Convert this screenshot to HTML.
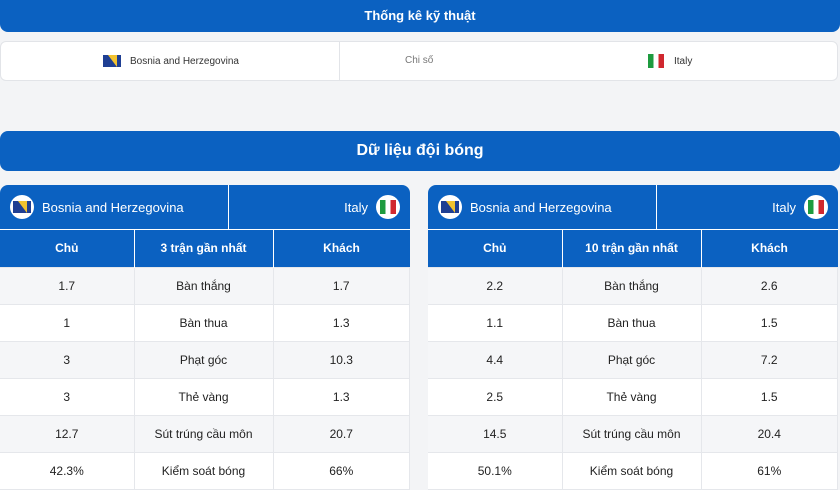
<!DOCTYPE html>
<html><head><meta charset="utf-8"><style>
*{box-sizing:border-box;margin:0;padding:0}
body{width:840px;height:486px;overflow:hidden;background:#f3f4f6;font-family:"Liberation Sans","Noto Sans CJK SC",sans-serif;position:relative}
.bar{position:absolute;left:0;width:840px;background:#0b61c1;color:#fff;font-weight:bold;text-align:center;border-radius:0 0 8px 8px}
.b1{top:0;height:32px;line-height:31px;font-size:13px}
.b2{top:131px;height:40px;line-height:40px;font-size:16px;border-radius:8px}
.card{position:absolute;top:41px;left:0;width:838px;height:40px;background:#fff;border:1px solid #e2e4e8;border-radius:6px;font-size:10px;color:#333}
.card .sep{position:absolute;left:338px;top:0;width:1px;height:38px;background:#e2e4e8}
.fl{display:inline-block;width:24px;height:24px;border-radius:50%;overflow:hidden;vertical-align:middle;background:#fff;position:relative}
.ba::before{content:"";position:absolute;left:3px;top:6px;width:18px;height:12px;background:#1f3f93}
.ba::after{content:"";position:absolute;left:8px;top:6px;width:9px;height:12px;background:#f2c22f;clip-path:polygon(0 0,100% 0,100% 100%)}
.it::before{content:"";position:absolute;left:4px;top:5px;width:16px;height:14px;background:linear-gradient(90deg,#1e9b3f 0 33%,#fff 33% 66%,#d0282f 66%)}
.tbl{position:absolute;top:185px;width:410px;background:#fff;border-radius:8px 8px 0 0;overflow:hidden}
.hd{height:45px;background:#0b61c1;color:#fff;font-size:13px;position:relative;border-bottom:1px solid #fff}
.hd .l{position:absolute;left:10px;top:10px;display:flex;align-items:center;gap:8px}
.hd .r{position:absolute;right:10px;top:10px;display:flex;align-items:center;gap:8px}
.hd .s{position:absolute;left:228px;top:0;width:1px;height:45px;background:#fff}
table{border-collapse:collapse;width:100%;font-size:12px;color:#222;text-align:center}
th{background:#0b61c1;color:#fff;height:37px;font-weight:bold;border-left:1px solid #fff}
td{height:37px;border:1px solid #e5e7eb}
th:first-child{border-left:none}
tr:nth-child(even) td{background:#f5f6f8}
td:first-child{border-left:none}
</style></head><body>
<div class="bar b1">Thống kê kỹ thuật</div>
<div class="card"><div class="sep"></div>
<div style="position:absolute;left:99px;top:7px;display:flex;align-items:center;gap:6px"><span class="fl ba"></span>Bosnia and Herzegovina</div>
<div style="position:absolute;left:404px;top:13px;color:#777">Chi số</div>
<div style="position:absolute;left:643px;top:7px;display:flex;align-items:center;gap:6px"><span class="fl it"></span>Italy</div>
</div>
<div class="bar b2">Dữ liệu đội bóng</div>

<div class="tbl" style="left:0">
<div class="hd"><div class="l"><span class="fl ba"></span>Bosnia and Herzegovina</div><div class="s"></div><div class="r">Italy<span class="fl it"></span></div></div>
<table><colgroup><col style="width:134px"><col style="width:139px"><col></colgroup>
<tr><th>Chủ</th><th>3 trận gần nhất</th><th>Khách</th></tr>
<tr><td>1.7</td><td>Bàn thắng</td><td>1.7</td></tr>
<tr><td>1</td><td>Bàn thua</td><td>1.3</td></tr>
<tr><td>3</td><td>Phạt góc</td><td>10.3</td></tr>
<tr><td>3</td><td>Thẻ vàng</td><td>1.3</td></tr>
<tr><td>12.7</td><td>Sút trúng cầu môn</td><td>20.7</td></tr>
<tr><td>42.3%</td><td>Kiểm soát bóng</td><td>66%</td></tr>
</table></div>

<div class="tbl" style="left:428px">
<div class="hd"><div class="l"><span class="fl ba"></span>Bosnia and Herzegovina</div><div class="s"></div><div class="r">Italy<span class="fl it"></span></div></div>
<table><colgroup><col style="width:134px"><col style="width:139px"><col></colgroup>
<tr><th>Chủ</th><th>10 trận gần nhất</th><th>Khách</th></tr>
<tr><td>2.2</td><td>Bàn thắng</td><td>2.6</td></tr>
<tr><td>1.1</td><td>Bàn thua</td><td>1.5</td></tr>
<tr><td>4.4</td><td>Phạt góc</td><td>7.2</td></tr>
<tr><td>2.5</td><td>Thẻ vàng</td><td>1.5</td></tr>
<tr><td>14.5</td><td>Sút trúng cầu môn</td><td>20.4</td></tr>
<tr><td>50.1%</td><td>Kiểm soát bóng</td><td>61%</td></tr>
</table></div>
</body></html>
